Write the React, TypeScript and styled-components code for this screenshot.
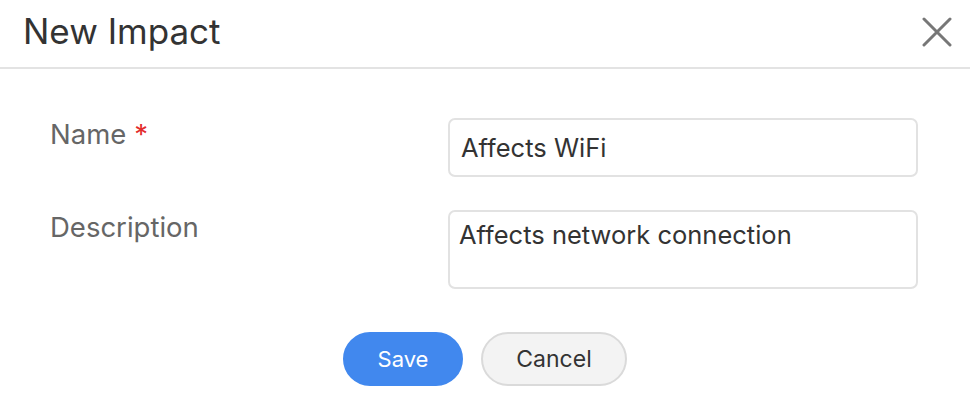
import React from "react";
import styled, { createGlobalStyle } from "styled-components";

const Global = createGlobalStyle`
  html, body { margin: 0; padding: 0; background: #fff; }
  body { font-family: Inter, "Noto Sans", sans-serif; }
  * { box-sizing: border-box; }
`;

const Dialog = styled.div`
  width: 970px;
  height: 408px;
  background: #fff;
  display: flex;
  flex-direction: column;
`;

const Header = styled.div`
  height: 69px;
  border-bottom: 2px solid #e3e3e3;
  display: flex;
  align-items: center;
  justify-content: space-between;
  padding: 0 16px 0 23px;
`;

const Title = styled.h1`
  margin: 0;
  font-size: 35px;
  font-weight: 400;
  color: #333;
  line-height: 1;
  margin-top: -4px;
`;

const Close = styled.button`
  width: 34px;
  height: 34px;
  border: 0;
  background: transparent;
  padding: 0;
  display: flex;
  align-items: center;
  justify-content: center;
  cursor: pointer;
  margin-top: -4px;
`;

const Body = styled.div`
  display: flex;
  flex-direction: column;
  padding: 49px 52px 0 50px;
  gap: 33px;
`;

const Row = styled.div`
  display: grid;
  grid-template-columns: 398px 470px;
  align-items: start;
`;

const Label = styled.label<{ $top: number }>`
  font-size: 27.5px;
  color: #666;
  padding-top: ${(p) => p.$top}px;
  line-height: 1.2;
`;

const Req = styled.span`
  color: #e32c2c;
  margin-left: 8px;
`;

const Input = styled.input`
  width: 470px;
  height: 59px;
  border: 2px solid #e2e2e2;
  border-radius: 7px;
  padding: 0 11px;
  font-family: inherit;
  font-size: 25.5px;
  color: #333;
  outline: none;
`;

const Area = styled.textarea`
  width: 470px;
  height: 79px;
  border: 2px solid #e2e2e2;
  border-radius: 7px;
  padding: 7px 9px;
  font-family: inherit;
  font-size: 25.5px;
  line-height: 1.25;
  color: #333;
  resize: none;
  outline: none;
`;

const Actions = styled.div`
  display: flex;
  justify-content: center;
  gap: 18px;
  margin-top: 43px;
`;

const Button = styled.button<{ $primary?: boolean }>`
  height: 54px;
  padding: 0 28px;
  min-width: ${(p) => (p.$primary ? 120 : 146)}px;
  border-radius: 27px;
  font-family: inherit;
  font-size: ${(p) => (p.$primary ? 22 : 23)}px;
  border: 2px solid ${(p) => (p.$primary ? "#4188ee" : "#dadada")};
  background: ${(p) => (p.$primary ? "#4188ee" : "#f3f3f3")};
  color: ${(p) => (p.$primary ? "#fff" : "#333")};
  cursor: pointer;
`;

export default function App() {
  return (
    <>
      <Global />
      <Dialog>
        <Header>
          <Title>New Impact</Title>
          <Close aria-label="Close">
            <svg width="30" height="30" viewBox="0 0 30 30">
              <path d="M2 2 L28 28 M28 2 L2 28" stroke="#777" strokeWidth="3" strokeLinecap="round" />
            </svg>
          </Close>
        </Header>
        <Body>
          <Row>
            <Label $top={0}>
              Name<Req>*</Req>
            </Label>
            <Input defaultValue="Affects WiFi" />
          </Row>
          <Row>
            <Label $top={1}>Description</Label>
            <Area defaultValue="Affects network connection" />
          </Row>
        </Body>
        <Actions>
          <Button $primary>Save</Button>
          <Button>Cancel</Button>
        </Actions>
      </Dialog>
    </>
  );
}
